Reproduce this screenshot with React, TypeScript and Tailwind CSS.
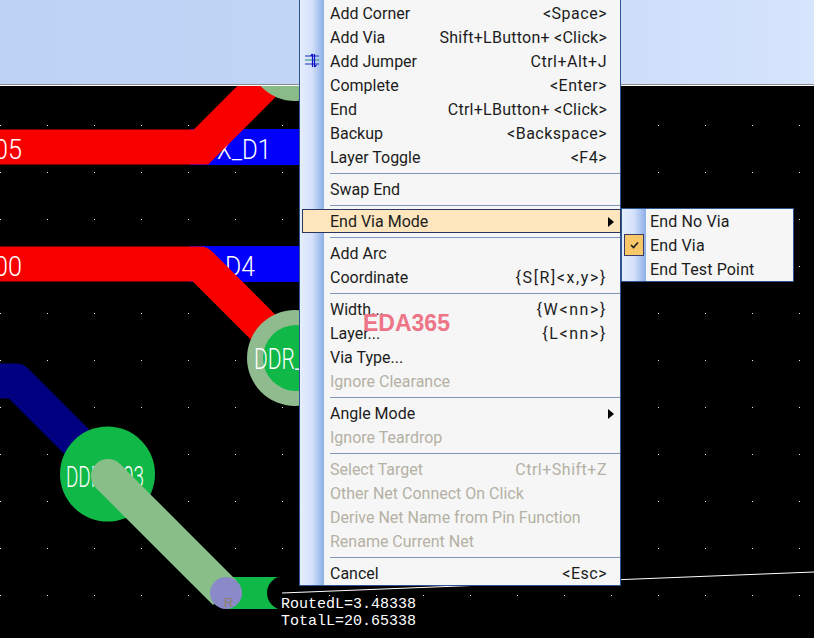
const dots: [number, number][] = [];
for (let x = 0; x <= 47 * 17; x += 47) {
  for (let y = 31; y < 638; y += 47) {
    dots.push([x, y]);
  }
}

type Row =
  | { sep: true }
  | {
      sep?: false;
      label: string;
      keys?: string;
      off?: boolean;
      arrow?: boolean;
      active?: boolean;
      jumper?: boolean;
    };

const rows: Row[] = [
  { label: "Add Corner", keys: "<Space>" },
  { label: "Add Via", keys: "Shift+LButton+ <Click>" },
  { label: "Add Jumper", keys: "Ctrl+Alt+J", jumper: true },
  { label: "Complete", keys: "<Enter>" },
  { label: "End", keys: "Ctrl+LButton+ <Click>" },
  { label: "Backup", keys: "<Backspace>" },
  { label: "Layer Toggle", keys: "<F4>" },
  { sep: true },
  { label: "Swap End" },
  { sep: true },
  { label: "End Via Mode", arrow: true, active: true },
  { sep: true },
  { label: "Add Arc" },
  { label: "Coordinate", keys: "{S[R]<x,y>}" },
  { sep: true },
  { label: "Width...", keys: "{W<nn>}" },
  { label: "Layer...", keys: "{L<nn>}" },
  { label: "Via Type..." },
  { label: "Ignore Clearance", off: true },
  { sep: true },
  { label: "Angle Mode", arrow: true },
  { label: "Ignore Teardrop", off: true },
  { sep: true },
  { label: "Select Target", keys: "Ctrl+Shift+Z", off: true },
  { label: "Other Net Connect On Click", off: true },
  { label: "Derive Net Name from Pin Function", off: true },
  { label: "Rename Current Net", off: true },
  { sep: true },
  { label: "Cancel", keys: "<Esc>" },
];

function keyTracking(keys: string) {
  if (keys.startsWith("{")) return "tracking-[1.6px]";
  if (keys.length > 15) return "tracking-[0.25px]";
  return "tracking-[0.5px]";
}

function JumperIcon() {
  return (
    <svg width="15" height="16" viewBox="0 0 15 16" fill="none" className="absolute left-[5px] top-[4px]">
      <path d="M0 3H14M0 11H14" stroke="#1c2fb8" strokeWidth="1" />
      <path d="M0 7H14" stroke="#2a8f70" strokeWidth="1" />
      <path d="M7.5 1V14M9.5 1V14" stroke="#1010c8" strokeWidth="1.2" />
      <path d="M5.5 3L7.5 1M9.5 14L11.5 12" stroke="#1010c8" strokeWidth="1.2" />
    </svg>
  );
}

function Arrow() {
  return <span className="h-0 w-0 border-y-[5px] border-l-[6px] border-y-transparent border-l-black" />;
}

function Board() {
  return (
    <svg width="814" height="552" viewBox="0 86 814 552" className="block">
      <rect x="0" y="86" width="814" height="552" fill="#000" />
      {dots.map(([x, y]) => (
        <rect key={`${x}-${y}`} x={x} y={y} width="1" height="1" fill="#e8e8e8" />
      ))}

      <rect x="190" y="129" width="110" height="36" fill="#0000fb" />
      <rect x="190" y="246" width="110" height="36" fill="#0000fb" />
      <g fill="#fff" fontFamily="Roboto, sans-serif" fontWeight="300" fontSize="27">
        <text x="271" y="159" textAnchor="end" textLength="54" lengthAdjust="spacingAndGlyphs">
          X_D1
        </text>
        <text x="255" y="276" textAnchor="end" textLength="30" lengthAdjust="spacingAndGlyphs">
          D4
        </text>
      </g>

      <path d="M-10 147H201L270 78" stroke="#f80000" strokeWidth="35" fill="none" />
      <path d="M-10 264H200L275 339" stroke="#f80000" strokeWidth="35" fill="none" strokeLinejoin="round" />
      <path d="M-10 381H16L110 475" stroke="#000080" strokeWidth="35" fill="none" strokeLinejoin="round" />

      <g fill="#fff" fontFamily="Roboto, sans-serif" fontWeight="300" fontSize="27">
        <text x="-6" y="159" textLength="28" lengthAdjust="spacingAndGlyphs">
          05
        </text>
        <text x="-6" y="276" textLength="28" lengthAdjust="spacingAndGlyphs">
          00
        </text>
      </g>

      <circle cx="295" cy="54" r="47" fill="#88bb88" />
      <circle cx="295" cy="358" r="48" fill="#8fbb8f" />
      <circle cx="296" cy="358" r="33" fill="#10b848" />
      <text
        x="254"
        y="369"
        fill="#fff"
        fontFamily="Roboto, sans-serif"
        fontWeight="300"
        fontSize="29"
        textLength="50"
        lengthAdjust="spacingAndGlyphs"
      >
        DDR_
      </text>

      <circle cx="107.5" cy="474" r="47.5" fill="#10b848" />
      <text
        x="66"
        y="487"
        fill="#fff"
        fontFamily="Roboto, sans-serif"
        fontWeight="300"
        fontSize="29"
        textLength="78"
        lengthAdjust="spacingAndGlyphs"
      >
        DDR_D03
      </text>

      <rect x="225" y="577" width="57" height="32" fill="#10b848" />
      <circle cx="284" cy="593" r="17" fill="#000" />
      <circle cx="108" cy="476" r="17" fill="#88bf88" />
      <path d="M108 476L225 593" stroke="#88bf88" strokeWidth="34" />
      <circle cx="226" cy="593" r="16" fill="#8a8ac8" />
      <text x="224" y="607" fill="#8f7f6a" fontFamily="'Liberation Sans', sans-serif" fontSize="13">
        R
      </text>

      <path d="M282 593L814 572" stroke="#fff" strokeWidth="1" />
      <g fill="#fff" fontFamily="'Liberation Mono', monospace" fontSize="15">
        <text x="281" y="608">
          RoutedL=3.48338
        </text>
        <text x="281" y="625">
          TotalL=20.65338
        </text>
      </g>
    </svg>
  );
}

function Menu() {
  return (
    <div className="absolute left-[299px] top-0 w-[322px] border-x border-b border-[#2c5590] bg-[#f6f6f6] pt-px">
      <div className="absolute bottom-0 left-0 top-0 w-[24px] bg-gradient-to-r from-[#e6eefd] via-[#d4e1fa] to-[#8caee6]" />
      {rows.map((row, i) =>
        row.sep ? (
          <div key={i} className="relative flex h-[8px] items-center pl-[30px]">
            <div className="h-px w-full bg-[#7f94b8]" />
          </div>
        ) : (
          <div
            key={i}
            className={`relative flex h-[24px] items-center justify-between pl-[30px] pt-px ${
              row.arrow ? "pr-[6px]" : "pr-[13px]"
            } ${row.off ? "text-[#b4b1a4]" : "text-[#1c1c1c]"}`}
          >
            {row.active && (
              <div className="absolute inset-x-[2px] inset-y-0 -right-px border border-[#2a3560] bg-[#fde6bd]" />
            )}
            {row.jumper && <JumperIcon />}
            <span className="relative">{row.label}</span>
            {row.keys && <span className={`relative ${keyTracking(row.keys)}`}>{row.keys}</span>}
            {row.arrow && (
              <span className="relative flex">
                <Arrow />
              </span>
            )}
          </div>
        )
      )}
    </div>
  );
}

function SubMenu() {
  return (
    <div className="absolute left-[621px] top-[208px] w-[173px] border border-[#2c5590] bg-[#f6f6f6] tracking-[0.15px] text-[#1c1c1c]">
      <div className="absolute bottom-0 left-0 top-0 w-[24px] bg-gradient-to-r from-[#e6eefd] via-[#d4e1fa] to-[#8caee6]" />
      <div className="relative flex h-[24px] items-center pl-[28px] pt-px">End No Via</div>
      <div className="relative flex h-[24px] items-center pl-[28px] pt-px">
        <div className="absolute left-[2px] top-[1px] flex h-[22px] w-[20px] items-center justify-center border border-[#3a3a6a] bg-[#f8c868]">
          <svg width="9" height="8" viewBox="0 0 9 8" fill="none">
            <path d="M1 4L3.5 6.5L8 1.5" stroke="#222" strokeWidth="1.7" />
          </svg>
        </div>
        End Via
      </div>
      <div className="relative flex h-[24px] items-center pl-[28px] pt-px">End Test Point</div>
    </div>
  );
}

export default function App() {
  return (
    <div className="relative h-[638px] w-[814px] overflow-hidden font-['Roboto',sans-serif] text-[16px]">
      <div className="h-[85px] border-b border-[#8a8a8a] bg-gradient-to-r from-[#bdd2f5] via-[#c1d5f6] via-40% to-[#d6e4fc]" />
      <div className="h-px" />
      <Board />
      <Menu />
      <SubMenu />
      <div className="absolute left-[363px] top-[306px] font-['Liberation_Sans',sans-serif] text-[23px] font-bold text-[#ee7487]">
        EDA365
      </div>
    </div>
  );
}
